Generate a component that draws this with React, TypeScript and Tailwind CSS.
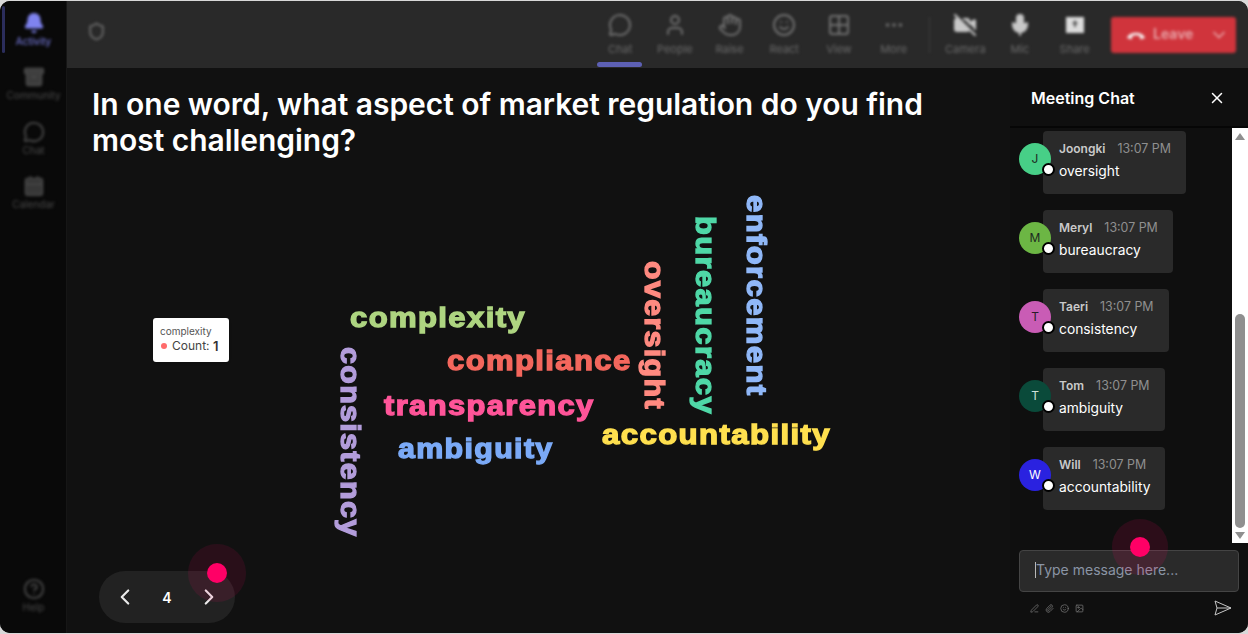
import React from "react";
import { Bell, Archive, MessageCircle, CalendarDays, HelpCircle, Shield, User, Hand, Smile, Grid2x2, MoreHorizontal, VideoOff, Mic, ChevronDown, ChevronLeft, ChevronRight, X, PenLine, Paperclip, Image } from "lucide-react";

const font = "font-['Inter','Liberation_Sans',sans-serif]";

function SideItem({ icon, label, active }: { icon: React.ReactNode; label: string; active?: boolean }) {
  return (
    <div className={`h-[54.4px] flex flex-col items-center justify-start gap-[1px] ${active ? "text-[#7f83ef]" : "text-[#4a4a4a]"}`}>
      {icon}
      <span className="text-[10px] leading-[12px]">{label}</span>
    </div>
  );
}

function ToolItem({ icon, label, light }: { icon: React.ReactNode; label: string; light?: boolean }) {
  return (
    <div className={`w-[54.7px] flex flex-col items-center gap-[4px] ${light ? "text-[#c8c8c8]" : "text-[#707070]"}`}>
      <div className="h-[26px] flex items-center justify-center">{icon}</div>
      <span className="text-[11px] leading-[14px] text-[#6a6a6a]">{label}</span>
    </div>
  );
}

function Msg({ initial, avatar, letter, name, text, mb }: { initial: string; avatar: string; letter: string; name: string; text: string; mb: string }) {
  return (
    <div className={`flex items-start ${mb}`}>
      <div className={`relative z-10 mt-[12px] w-8 h-8 rounded-full flex items-center justify-center text-[12px] ${avatar} ${letter}`}>
        {initial}
        <span className="absolute right-[-4px] bottom-[-1px] w-[13px] h-[13px] rounded-full bg-white border-2 border-black" />
      </div>
      <div className="-ml-2 h-[63px] bg-[#2a2a2a] rounded-[4px] pl-4 pr-[15px] pt-[10px]">
        <div className="flex gap-3 items-baseline leading-[16px]">
          <span className="text-[12px] font-semibold text-[#c9c9c9]">{name}</span>
          <span className="text-[12.4px] text-[#8f8f8f]">13:07 PM</span>
        </div>
        <div className="mt-[5px] text-[13.8px] leading-[18px] text-white">{text}</div>
      </div>
    </div>
  );
}

const wordBase = "absolute font-['Liberation_Sans',sans-serif] font-bold text-[27px] leading-[32px] tracking-[1.2px] whitespace-nowrap [-webkit-text-stroke:1.3px_currentColor]";
const flat = "origin-left";
const upright = "[writing-mode:vertical-rl] origin-top";

export default function App() {
  return (
    <div className={`w-[1248px] h-[634px] bg-[#d8d8d8] overflow-hidden ${font}`}>
      <div className="w-[1248px] h-[632px] mt-[1px] rounded-[10px] overflow-hidden flex bg-[#111111] relative">
        {/* sidebar */}
        <aside className="w-[67px] shrink-0 bg-[#090909] border-r border-[#161616] relative overflow-hidden">
          <div className="h-full flex flex-col pt-[11px] pl-[1px] blur-[1.4px]">
            <SideItem active icon={<Bell size={22} fill="#7f83ef" />} label="Activity" />
            <SideItem icon={<Archive size={22} fill="#3c3c3c" />} label="Community" />
            <SideItem icon={<MessageCircle size={22} />} label="Chat" />
            <SideItem icon={<CalendarDays size={22} fill="#333" />} label="Calendar" />
            <div className="flex-1" />
            <div className="mb-[1px]"><SideItem icon={<HelpCircle size={22} />} label="Help" /></div>
          </div>
          <div className="absolute left-[2px] top-[5px] w-[3px] h-[47px] rounded-full bg-[#2b2d5c] blur-[0.5px]" />
        </aside>

        <div className="flex-1 min-w-0 flex flex-col">
          {/* toolbar */}
          <header className="h-[67px] shrink-0 bg-[#292929] flex items-start relative">
            <div className="w-full h-full flex items-start pt-[11px] blur-[1.4px]">
              <div className="pl-[20px] pt-[10px] text-[#686868]"><Shield size={19} strokeWidth={2.4} /></div>
              <div className="flex-1" />
              <ToolItem icon={<MessageCircle size={24} />} label="Chat" />
              <ToolItem icon={<User size={24} />} label="People" />
              <ToolItem icon={<Hand size={24} />} label="Raise" />
              <ToolItem icon={<Smile size={24} />} label="React" />
              <ToolItem icon={<Grid2x2 size={24} />} label="View" />
              <ToolItem icon={<MoreHorizontal size={22} />} label="More" />
              <div className="w-[1px] h-[36px] bg-[#3f3f3f] mx-[8px] mt-[5px]" />
              <ToolItem light icon={<VideoOff size={24} fill="#c8c8c8" />} label="Camera" />
              <ToolItem light icon={<Mic size={24} fill="#c8c8c8" />} label="Mic" />
              <ToolItem light icon={
                <svg width="24" height="24" viewBox="0 0 24 24">
                  <path d="M3 4 H21 V20 H3 Z" fill="#dcdcdc" />
                  <path d="M12 7 L15 11 H13 V14 H11 V11 H9 Z" fill="#555" />
                </svg>
              } label="Share" />
              <div className="ml-[9px] mr-[12px] mt-[5px] w-[125px] h-[36px] bg-[#d0343c] rounded-[3px] flex items-center text-[#e8a8ac] pl-[15px] pr-[7px]">
                <svg width="20" height="12" viewBox="0 0 20 12">
                  <path d="M1 9 C3 2 17 2 19 9 L14.5 10.5 L13.5 7 C11.5 6 8.5 6 6.5 7 L5.5 10.5 Z" fill="#f5f0f0" />
                </svg>
                <span className="ml-[7px] text-[14px] font-semibold -mt-[3px]">Leave</span>
                <div className="flex-1" />
                <ChevronDown size={20} />
              </div>
            </div>
            <div className="absolute left-[530px] top-[61px] w-[45px] h-[5px] rounded-full bg-[#5d60b4] blur-[0.6px]" />
          </header>

          <div className="flex-1 min-h-0 flex">
            {/* main */}
            <main className="flex-1 min-w-0 relative pl-[25px] pt-[18px]">
              <h1 className="text-[30px] leading-[36px] font-semibold text-white w-[880px] tracking-[-0.04px]">
                In one word, what aspect of market regulation do you find most challenging?
              </h1>

              <div className="absolute left-[86px] top-[250px] bg-white rounded-[3px] shadow w-[76px] h-[44px] pl-[7px] pt-[6px] text-[#555]">
                <div className="text-[10px] leading-[14px]">complexity</div>
                <div className="flex items-center text-[12px] leading-[16px] text-[#444]">
                  <span className="w-[6px] h-[6px] rounded-full bg-[#ff6b6b] ml-[1px] mr-[5px]" />
                  Count:&nbsp;<b className="font-semibold text-[13px] text-[#333]">1</b>
                </div>
              </div>

              <span className={`${wordBase} ${flat} scale-x-[1.15] left-[283px] top-[234px] text-[#aed581]`}>complexity</span>
              <span className={`${wordBase} ${flat} scale-x-[1.15] left-[380px] top-[277px] text-[#f4675d]`}>compliance</span>
              <span className={`${wordBase} ${flat} scale-x-[1.145] left-[317px] top-[322px] text-[#ff5599]`}>transparency</span>
              <span className={`${wordBase} ${flat} scale-x-[1.125] left-[331px] top-[365px] text-[#7baaf7]`}>ambiguity</span>
              <span className={`${wordBase} ${flat} scale-x-[1.155] left-[535px] top-[351px] text-[#ffe04f]`}>accountability</span>
              <span className={`${wordBase} ${upright} scale-y-[1.125] left-[267px] top-[279px] text-[#b39ddb]`}>consistency</span>
              <span className={`${wordBase} ${upright} scale-y-[1.125] left-[571px] top-[193px] text-[#ff8a80]`}>oversight</span>
              <span className={`${wordBase} ${upright} scale-y-[1.145] left-[622px] top-[148px] text-[#4fd8a7]`}>bureaucracy</span>
              <span className={`${wordBase} ${upright} scale-y-[1.15] left-[673px] top-[127px] text-[#90b8f8]`}>enforcement</span>

              <div className="absolute left-[32px] bottom-[10px] w-[136px] h-[52px] rounded-full bg-[#222222] flex items-center justify-between px-[13px] text-white">
                <ChevronLeft size={26} className="text-[#e8e8e8]" />
                <span className="text-[14px] font-semibold">4</span>
                <ChevronRight size={26} className="text-[#e8e8e8]" />
              </div>
            </main>

            {/* chat panel */}
            <section className="w-[238px] shrink-0 bg-[#0f0f0f] flex flex-col">
              <div className="h-[60px] shrink-0 border-b-2 border-[#060606] flex items-center justify-between pl-[21px] pr-[22px] pt-[2px]">
                <span className="text-[16px] font-semibold text-white">Meeting Chat</span>
                <X size={18} className="text-white" />
              </div>
              <div className="h-[415px] shrink-0 flex overflow-hidden">
                <div className="flex-1 min-w-0 pl-[9px] pt-[3px]">
                  <Msg initial="J" avatar="bg-[#47cf87]" letter="text-[#1c2a22]" name="Joongki" text="oversight" mb="mb-[16px]" />
                  <Msg initial="M" avatar="bg-[#6cb644]" letter="text-[#1c2a22]" name="Meryl" text="bureaucracy" mb="mb-[16px]" />
                  <Msg initial="T" avatar="bg-[#c95cb5]" letter="text-[#2a1c28]" name="Taeri" text="consistency" mb="mb-[16px]" />
                  <Msg initial="T" avatar="bg-[#0a4a3a]" letter="text-[#cfe0da]" name="Tom" text="ambiguity" mb="mb-[16px]" />
                  <Msg initial="W" avatar="bg-[#2a22e0]" letter="text-white" name="Will" text="accountability" mb="mb-0" />
                </div>
                <div className="w-[16px] shrink-0 bg-white flex flex-col items-center">
                  <svg width="12" height="12" viewBox="0 0 12 12" className="mt-[3px] shrink-0"><path d="M6 2 L11 9 L1 9 Z" fill="#8f8f8f" /></svg>
                  <div className="mt-[171px] w-[10px] flex-1 rounded-full bg-[#8f8f8f]" />
                  <svg width="12" height="12" viewBox="0 0 12 12" className="mt-[1px] mb-[2px] shrink-0"><path d="M1 3 L11 3 L6 10 Z" fill="#8f8f8f" /></svg>
                </div>
              </div>
              <div className="flex-1 px-[9px] pt-[7px]">
                <div className="h-[42px] w-[220px] bg-[#2a2a2a] border border-[#444] rounded-[4px] flex items-center pl-[15px] pb-[3px] text-[14px] text-[#8a95a5]">
                  <span className="w-[1px] h-[16px] bg-[#b8b8b8]" />
                  Type message here...
                </div>
                <div className="flex items-center pl-[11px] pr-[7px] mt-[6px] h-[20px] text-[#767676]">
                  <div className="flex items-center gap-[6px]">
                    <PenLine size={9} />
                    <Paperclip size={9} />
                    <Smile size={9} />
                    <Image size={9} />
                  </div>
                  <div className="flex-1" />
                  <svg width="18" height="16" viewBox="0 0 18 16" fill="none" stroke="#c8c8c8" strokeWidth="1" strokeLinejoin="round">
                    <path d="M1 1 L17 8 L1 15 L3 8 Z M3 8 H17" />
                  </svg>
                </div>
              </div>
            </section>
          </div>
        </div>

        {/* pointers */}
        <div className="absolute left-[188px] top-[543px] w-[58px] h-[58px] rounded-full bg-[#ff0066]/10 flex items-center justify-center">
          <div className="w-[20px] h-[20px] rounded-full bg-[#ff0066]" />
        </div>
        <div className="absolute left-[1112px] top-[518px] w-[56px] h-[56px] rounded-full bg-[#ff0066]/12 flex items-center justify-center">
          <div className="w-[20px] h-[20px] rounded-full bg-[#ff0066]" />
        </div>
      </div>
    </div>
  );
}
